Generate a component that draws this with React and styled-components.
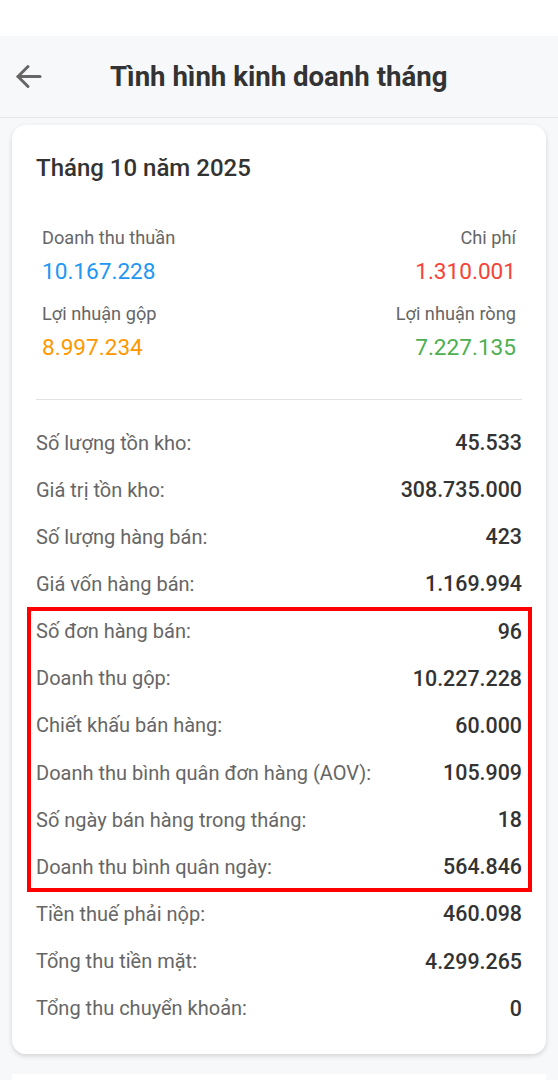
import React from 'react';
import styled, { createGlobalStyle } from 'styled-components';

const GlobalStyle = createGlobalStyle`
    html, body {
        margin: 0;
        padding: 0;
        background: #f7f8fa;
        font-family: Roboto, "Noto Sans", "Liberation Sans", sans-serif;
    }
`;

const Page = styled.div`
    width: 558px;
    min-height: 1080px;
    background: #f7f8fa;
    overflow: hidden;
`;

const StatusBar = styled.div`
    height: 36px;
    background: #ffffff;
`;

const Header = styled.header`
    height: 81px;
    display: flex;
    align-items: center;
    border-bottom: 1px solid #e6e7ea;
`;

const BackButton = styled.button`
    width: 60px;
    height: 60px;
    padding: 0 0 0 15px;
    border: none;
    background: transparent;
    display: flex;
    align-items: center;
`;

const HeaderTitle = styled.h1`
    margin: 0 0 0 50px;
    font-size: 27.6px;
    font-weight: 700;
    color: #333;
`;

const Card = styled.section`
    margin: 7px 12px 0;
    background: #fff;
    border-radius: 14px;
    box-shadow: 0 2px 5px rgba(0, 0, 0, 0.15);
    padding: 28px 24px 22px;
`;

const CardTitle = styled.h2`
    margin: 0;
    font-size: 24px;
    line-height: 30px;
    font-weight: 500;
    color: #333;
`;

const Summary = styled.div`
    margin: 42px 6px 0;
    display: grid;
    grid-template-columns: 1fr 1fr;
    row-gap: 9px;
    padding-bottom: 31px;
`;

const SummaryItem = styled.div`
    display: flex;
    flex-direction: column;
    align-items: ${p => (p.right ? 'flex-end' : 'flex-start')};
`;

const SummaryLabel = styled.span`
    font-size: 18.2px;
    line-height: 26px;
    color: #666;
`;

const SummaryValue = styled.span`
    font-size: 22.6px;
    line-height: 41px;
    color: ${p => p.color};
`;

const Divider = styled.hr`
    margin: 0;
    border: none;
    border-top: 1px solid #e2e2e2;
`;

const List = styled.div`
    margin-top: 19px;
`;

const Row = styled.div`
    height: 47.15px;
    display: flex;
    align-items: center;
    justify-content: space-between;
`;

const RowLabel = styled.span`
    font-size: 20px;
    color: #666;
`;

const RowValue = styled.span`
    font-size: 21.4px;
    font-weight: 500;
    color: #333;
`;

const Highlight = styled.div`
    position: relative;
    &::after {
        content: '';
        position: absolute;
        top: -1px;
        bottom: -2px;
        left: -9px;
        right: -10px;
        border: 4px solid #ff0000;
        pointer-events: none;
    }
`;

const NextCard = styled.div`
    margin: 20px 12px 0;
    height: 40px;
    background: #fff;
`;

const beforeRows = [
    ['Số lượng tồn kho:', '45.533'],
    ['Giá trị tồn kho:', '308.735.000'],
    ['Số lượng hàng bán:', '423'],
    ['Giá vốn hàng bán:', '1.169.994'],
];

const highlightRows = [
    ['Số đơn hàng bán:', '96'],
    ['Doanh thu gộp:', '10.227.228'],
    ['Chiết khấu bán hàng:', '60.000'],
    ['Doanh thu bình quân đơn hàng (AOV):', '105.909'],
    ['Số ngày bán hàng trong tháng:', '18'],
    ['Doanh thu bình quân ngày:', '564.846'],
];

const afterRows = [
    ['Tiền thuế phải nộp:', '460.098'],
    ['Tổng thu tiền mặt:', '4.299.265'],
    ['Tổng thu chuyển khoản:', '0'],
];

const renderRows = rows =>
    rows.map(([label, value]) => (
        <Row key={label}>
            <RowLabel>{label}</RowLabel>
            <RowValue>{value}</RowValue>
        </Row>
    ));

export default function App() {
    return (
        <Page>
            <GlobalStyle />
            <StatusBar />
            <Header>
                <BackButton aria-label="back">
                    <svg width="27" height="25" viewBox="0 0 27 25" fill="none" stroke="#666" strokeWidth="3" strokeLinecap="round" strokeLinejoin="round">
                        <path d="M25 12.5H3" />
                        <path d="M13 2.5L3 12.5l10 10" />
                    </svg>
                </BackButton>
                <HeaderTitle>Tình hình kinh doanh tháng</HeaderTitle>
            </Header>
            <Card>
                <CardTitle>Tháng 10 năm 2025</CardTitle>
                <Summary>
                    <SummaryItem>
                        <SummaryLabel>Doanh thu thuần</SummaryLabel>
                        <SummaryValue color="#2196f3">10.167.228</SummaryValue>
                    </SummaryItem>
                    <SummaryItem right>
                        <SummaryLabel>Chi phí</SummaryLabel>
                        <SummaryValue color="#f44336">1.310.001</SummaryValue>
                    </SummaryItem>
                    <SummaryItem>
                        <SummaryLabel>Lợi nhuận gộp</SummaryLabel>
                        <SummaryValue color="#ff9800">8.997.234</SummaryValue>
                    </SummaryItem>
                    <SummaryItem right>
                        <SummaryLabel>Lợi nhuận ròng</SummaryLabel>
                        <SummaryValue color="#4caf50">7.227.135</SummaryValue>
                    </SummaryItem>
                </Summary>
                <Divider />
                <List>
                    {renderRows(beforeRows)}
                    <Highlight>{renderRows(highlightRows)}</Highlight>
                    {renderRows(afterRows)}
                </List>
            </Card>
            <NextCard />
        </Page>
    );
}
